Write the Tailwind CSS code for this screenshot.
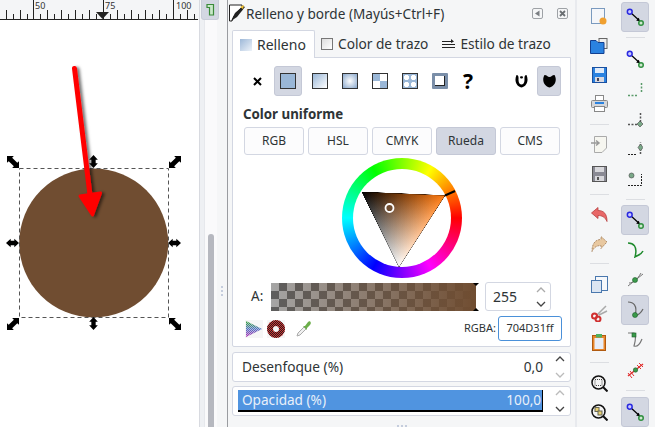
<!DOCTYPE html>
<html><head><meta charset="utf-8">
<script src="https://cdn.jsdelivr.net/npm/@tailwindcss/browser@4"></script>
</head>
<body class="m-0 overflow-hidden bg-[#f5f6f7]">
<svg class="absolute h-0 w-0">
<defs>
<symbol id="node" viewBox="0 0 24 24"><path d="M6 6 L17 16" stroke="#000" stroke-width="1.600"/><path d="M19 18 L13.500 16.500 L17 13Z" fill="#000"/><circle cx="5" cy="5" r="3.200" fill="#c8c8ff" stroke="#2a2ae0" stroke-width="2"/><circle cx="20" cy="20" r="3" fill="#cfe8cf" stroke="#2f8f3f" stroke-width="2"/></symbol>
<symbol id="arr" viewBox="0 0 14 14"><path d="M0 0H8L6 2L12 8L14 6V14H6L8 12L2 6L0 8Z" fill="#000"/></symbol>
<symbol id="arv" viewBox="0 0 14 18"><path d="M7 0L13 6.500H10V11.500H13L7 18L1 11.500H4V6.500H1Z" fill="#000"/></symbol>
<linearGradient id="tri1" gradientUnits="userSpaceOnUse" x1="37.600" y1="69.700" x2="103" y2="37.500"><stop offset="0" stop-color="#000"/><stop offset="1" stop-color="#ff7a10"/></linearGradient>
<linearGradient id="tri2" gradientUnits="userSpaceOnUse" x1="60.100" y1="35.700" x2="57" y2="109"><stop offset="0" stop-color="#000"/><stop offset="1" stop-color="#fff"/></linearGradient>
<pattern id="mesh" width="2" height="2" patternUnits="userSpaceOnUse"><rect width="1" height="1" fill="#222"/><rect x="1" y="1" width="1" height="1" fill="#222"/></pattern>
<pattern id="meshw" width="2" height="2" patternUnits="userSpaceOnUse"><rect width="1" height="1" fill="#fff"/><rect x="1" y="1" width="1" height="1" fill="#fff"/></pattern>
<linearGradient id="rainb" x1="0" y1="0" x2="0" y2="1"><stop offset="0" stop-color="#30a030"/><stop offset=".5" stop-color="#5070c0"/><stop offset="1" stop-color="#b030b0"/></linearGradient>
<filter id="sh" x="-30%" y="-10%" width="160%" height="120%"><feDropShadow dx="2.500" dy="1" stdDeviation="1.500" flood-color="#000" flood-opacity=".55"/></filter>
</defs>
</svg>

<div class="flex h-[427px] w-[655px] overflow-hidden font-['Noto_Sans',sans-serif] text-[#2e3436]">

  <!-- canvas column -->
  <div class="flex w-[199px] shrink-0 flex-col">
    <div class="relative h-[20px] shrink-0 bg-[#f4f5f7]">
      <svg class="absolute left-0 top-0" width="199" height="20">
        <path d="M6.500 19V10M13.500 19V14M20.500 19V10M27.500 19V14M33.500 19V0M40.500 19V14M47.500 19V10M54.500 19V14M61.500 19V10M68.500 19V14M75.500 19V10M82.500 19V14M89.500 19V10M96.500 19V14M103.500 19V0M110.500 19V14M117.500 19V10M124.500 19V14M131.500 19V10M138.500 19V14M145.500 19V10M152.500 19V14M159.500 19V10M166.500 19V14M173.500 19V0M180.500 19V14M187.500 19V10M194.500 19V14" stroke="#222" fill="none"/>
        <path d="M0 19.500H198" stroke="#222"/>
        <path d="M96 12H109L102.500 19Z" fill="#222"/>
      </svg>
      <span class="absolute left-[35px] top-0 text-[9px] leading-[12px] text-[#333]">50</span>
      <span class="absolute left-[105px] top-0 text-[9px] leading-[12px] text-[#333]">75</span>
      <span class="absolute left-[176px] top-0 text-[9px] leading-[12px] text-[#333]">100</span>
    </div>
    <div class="relative flex-1 bg-white">
      <svg class="absolute left-0 top-0" width="199" height="407" viewBox="0 20 199 407">
        <circle cx="93.700" cy="243" r="74.500" fill="#704d31"/>
        <rect x="19.500" y="168.500" width="149" height="149" fill="none" stroke="#555" stroke-dasharray="4 3"/>
        <g filter="url(#sh)">
          <path d="M74.500 68.500L90 195" stroke="#ff0000" stroke-width="5" stroke-linecap="round" fill="none"/>
          <path d="M80 196L100.500 193L92.500 215Z" fill="#ff0000" stroke="#ff0000" stroke-width="3" stroke-linejoin="round"/>
        </g>
        <use href="#arr" x="7" y="156" width="12" height="12"/>
        <use href="#arr" x="169" y="156" width="12" height="12" transform="matrix(-1 0 0 1 350 0)"/>
        <use href="#arr" x="7" y="318" width="12" height="12" transform="matrix(1 0 0 -1 0 648)"/>
        <use href="#arr" x="169" y="318" width="12" height="12"/>
        <use href="#arv" x="87" y="155" width="13" height="13"/>
        <use href="#arv" x="87" y="317" width="13" height="13"/>
        <use href="#arv" x="0" y="0" width="13" height="13" transform="translate(19 236.500) rotate(90)"/>
        <use href="#arv" x="0" y="0" width="13" height="13" transform="translate(181 236.500) rotate(90)"/>
      </svg>
    </div>
  </div>

  <!-- scrollbar strip -->
  <div class="flex w-[28px] shrink-0 flex-col border-l border-[#d8dae0]">
    <div class="ml-[1px] flex h-[20px] w-[18px] items-center justify-center rounded-b-[3px] border border-t-0 border-[#c8ccd8] bg-[#d3d7e2]">
      <svg width="9" height="13" viewBox="0 0 9 13"><path d="M1 1.500H7.500V12H3.500V4.500H1Z" fill="#c9e8c9" stroke="#3a8a3a" stroke-width="1.200"/></svg>
    </div>
    <div class="relative flex flex-1">
      <div class="w-[4px] bg-[#eef0f3]"></div>
      <div class="relative w-[13px] border-l border-[#e6e8ec] bg-[#fafafb]">
        <div class="absolute left-[3px] top-[214px] h-[200px] w-[6px] rounded-[3px] bg-[#b6b8bf]"></div>
      </div>
      <div class="flex flex-1 flex-col items-center pt-[266px]">
        <div class="grid gap-[2px] text-[0]">
          <span class="size-[2px] bg-[#c5cddd]"></span><span class="size-[2px] bg-[#c5cddd]"></span><span class="size-[2px] bg-[#c5cddd]"></span>
        </div>
      </div>
    </div>
  </div>

  <!-- panel -->
  <div class="flex w-[348px] shrink-0 flex-col border-l border-[#9a9ca0]">
    <div class="flex h-[27px] shrink-0 items-center pl-[1px] pr-[7px]">
      <svg width="17" height="19" viewBox="0 0 17 19"><path d="M0.500 1H13V3L5 12L3 17H0.500Z" fill="#fff" stroke="#222"/><path d="M2 17L6 9L14 2L16 3L8 13Z" fill="#222"/><path d="M11 3L15 1L14 5Z" fill="#f2c230"/></svg>
      <span class="text-[13.600px] leading-[20px]">Relleno y borde (Mayús+Ctrl+F)</span>
      <div class="ml-auto flex gap-[14px]">
        <span class="flex size-[11px] items-center justify-center rounded-[2px] border border-[#9ea2a6]"><svg width="7" height="7" viewBox="0 0 7 7"><path d="M5.500 0.500V6.500L1 3.500Z" fill="#7a7e82"/></svg></span>
        <span class="flex size-[11px] items-center justify-center rounded-[2px] border border-[#9ea2a6]"><svg width="7" height="7" viewBox="0 0 7 7"><path d="M1 1L6 6M6 1L1 6" stroke="#6a6e72" stroke-width="1.800"/></svg></span>
      </div>
    </div>

    <div class="flex flex-1 flex-col bg-[#f5f6f7] pl-[4px] pr-[4px] pt-[3px]">
      <!-- tabs -->
      <div class="relative z-10 flex h-[28px] shrink-0 items-stretch">
        <div class="flex w-[83px] items-center gap-[5px] rounded-t-[2px] border border-b-0 border-[#d3d7e2] bg-white pl-[7px]">
          <span class="size-[12px] bg-[linear-gradient(135deg,#9db8d8,#eef3f9)]"></span>
          <span class="text-[14px]">Relleno</span>
        </div>
        <div class="flex items-center gap-[5px] pl-[6px]">
          <span class="size-[12px] border border-[#777] bg-[linear-gradient(135deg,#ddd,#fff)]"></span>
          <span class="text-[13.700px]">Color de trazo</span>
        </div>
        <div class="flex items-center gap-[5px] pl-[14px]">
          <svg width="13" height="12" viewBox="0 0 13 12"><path d="M0 3.500H11M0 6.500H13M0 9.500H13" stroke="#222"/><path d="M9 1L12 3.500L9 5Z" fill="#222"/></svg>
          <span class="text-[13.700px]">Estilo de trazo</span>
        </div>
      </div>

      <!-- card -->
      <div class="mt-[-1px] flex h-[290px] w-[339px] shrink-0 flex-col rounded-b-[2px] border border-[#d3d7e2] bg-white">
        <div class="mt-[8px] flex h-[30px] items-stretch pl-[12px]">
          <span class="flex w-[29px] items-center justify-center pr-[5px]"><svg width="9" height="9" viewBox="0 0 9 9"><path d="M1 1L8 8M8 1L1 8" stroke="#000" stroke-width="2"/></svg></span>
          <span class="flex w-[28px] items-center justify-center rounded-[3px] border border-[#c4c8d6] bg-[#d3d7e2]"><span class="size-[16px] border border-[#333] bg-[#9ab7d7]"></span></span>
          <span class="flex w-[30px] items-center justify-center pl-[6px]"><span class="size-[16px] border border-[#333] bg-[linear-gradient(135deg,#9ab7d7,#fff)]"></span></span>
          <span class="flex w-[30px] items-center justify-center pl-[6px]"><span class="size-[16px] border border-[#333] bg-[radial-gradient(circle,#fff,#8aa8cc)]"></span></span>
          <span class="flex w-[30px] items-center justify-center pl-[6px]"><span class="size-[16px] border border-[#333] bg-[conic-gradient(#fff_25%,#9ab7d7_0_50%,#fff_0_75%,#9ab7d7_0)]"></span></span>
          <span class="flex w-[30px] items-center justify-center pl-[6px]"><span class="size-[16px] border border-[#333] bg-[#9ab7d7] bg-[radial-gradient(circle,#fff_45%,#9ab7d7_60%)] bg-[length:7px_7px]"></span></span>
          <span class="flex w-[30px] items-center justify-center pl-[6px]"><span class="size-[16px] rounded-[1px] border-[3px] border-[#7a8ea8] bg-white shadow-[inset_-1px_-1px_0_#222]"></span></span>
          <span class="flex w-[32px] items-center justify-center text-[21px] font-bold leading-none text-black">?</span>
          <span class="ml-[25px] flex w-[24px] items-center justify-center">
            <svg width="13" height="14" viewBox="0 0 13 14"><path d="M1.500 1C4 1 3.500 4 3.500 6C3.500 9 5 10.500 6.500 10.500C8 10.500 9.500 9 9.500 6C9.500 4 9 1 11.500 1C13.500 5 13 12 6.500 13.500C0 12 -0.500 5 1.500 1Z" fill="#000"/><path d="M5 3C5 2 8 2 8 3C8 5 5 5 5 3Z" fill="#000"/></svg>
          </span>
          <span class="ml-[4px] flex w-[24px] items-center justify-center rounded-[3px] border border-[#c4c8d6] bg-[#d3d7e2]">
            <svg width="13" height="14" viewBox="0 0 13 14"><path d="M1.500 1C4 1 4.500 3 6.500 3C8.500 3 9 1 11.500 1C14 5 13 12 6.500 13.500C0 12 -1 5 1.500 1Z" fill="#000"/></svg>
          </span>
        </div>
        <div class="ml-[10px] mt-[8px] text-[13.300px] font-bold leading-[20px]">Color uniforme</div>
        <div class="ml-[11px] mt-[3px] flex gap-[4px] text-[12px]">
          <span class="flex h-[28px] w-[60px] items-center justify-center rounded-[3px] border border-[#d3d7e2] bg-[#fcfcfd]">RGB</span>
          <span class="flex h-[28px] w-[60px] items-center justify-center rounded-[3px] border border-[#d3d7e2] bg-[#fcfcfd]">HSL</span>
          <span class="flex h-[28px] w-[60px] items-center justify-center rounded-[3px] border border-[#d3d7e2] bg-[#fcfcfd]">CMYK</span>
          <span class="flex h-[28px] w-[60px] items-center justify-center rounded-[3px] border border-[#c4c8d6] bg-[#d3d7e2]">Rueda</span>
          <span class="flex h-[28px] w-[60px] items-center justify-center rounded-[3px] border border-[#d3d7e2] bg-[#fcfcfd]">CMS</span>
        </div>
        <!-- wheel -->
        <div class="relative ml-[109px] mt-[3px] size-[120px] rounded-full bg-[conic-gradient(#80ff00,#ffff00_30deg,#ff0000_90deg,#ff00ff_150deg,#0000ff_210deg,#00ffff_270deg,#00ff00_330deg,#80ff00)]">
          <div class="absolute inset-[11px] rounded-full bg-white"></div>
          <svg class="absolute left-0 top-0" width="120" height="120" viewBox="0 0 120 120">
            <g class="isolate">
              <path d="M20 34L103 37.500L57 109Z" fill="#000"/>
              <path class="mix-blend-plus-lighter" d="M20 34L103 37.500L57 109Z" fill="url(#tri1)"/>
              <path class="mix-blend-plus-lighter" d="M20 34L103 37.500L57 109Z" fill="url(#tri2)"/>
            </g>
            <path d="M103 37.500L113 33" stroke="#000" stroke-width="2.200"/>
            <circle cx="47.500" cy="50" r="4" fill="#704d31" stroke="#fff" stroke-width="1.800"/>
          </svg>
        </div>
        <!-- alpha -->
        <div class="mt-[4px] flex items-center pl-[18px]">
          <span class="w-[20px] text-[13.500px]">A:</span>
          <div class="relative h-[28px] w-[205px] bg-[#a5a5a5] bg-[repeating-conic-gradient(#5e5e5e_0_25%,#a5a5a5_0_50%)] bg-[length:16px_16px]">
            <div class="h-full w-full bg-[linear-gradient(to_right,#704d3100,#704d31)]"></div>
            <span class="absolute right-[-3px] top-[0] size-0 border-x-[3px] border-t-[3px] border-x-transparent border-t-black"></span>
            <span class="absolute bottom-[0] right-[-3px] size-0 border-x-[3px] border-b-[3px] border-x-transparent border-b-black"></span>
          </div>
          <div class="ml-[9px] flex h-[29px] w-[66px] items-center justify-between rounded-[3px] border border-[#d3d7e2] bg-white pl-[7px] pr-[3px]">
            <span class="text-[14px]">255</span>
            <svg width="12" height="24" viewBox="0 0 12 24"><path d="M2 7L6 3L10 7" stroke="#aaa" fill="none" stroke-width="1.300"/><path d="M2 17L6 21L10 17" stroke="#444" fill="none" stroke-width="1.300"/></svg>
          </div>
        </div>
        <!-- icon row -->
        <div class="mt-[5px] flex h-[25px] items-center pl-[12px]">
          <svg width="18" height="18" viewBox="0 0 18 18"><rect width="18" height="18" fill="#f6f6f6"/><path d="M1 1L17 9L1 17Z" fill="url(#rainb)"/><path d="M1 1L17 9L1 17Z" fill="url(#meshw)" opacity=".55"/></svg>
          <svg width="18" height="18" viewBox="0 0 18 18" class="ml-[4px]"><rect width="18" height="18" fill="#f6f6f6"/><circle cx="9" cy="9" r="6" fill="none" stroke="#d83030" stroke-width="6"/><circle cx="9" cy="9" r="6" fill="none" stroke="url(#mesh)" stroke-width="6"/></svg>
          <svg width="16" height="17" viewBox="0 0 16 17" class="ml-[11px]"><path d="M1 16L2 13L8 7L10 9L4 15Z" fill="#f0f0f0" stroke="#aaa"/><path d="M7 6L9 6L12 2C14 0 16 3 14 5L11 8L11 10Z" fill="#6cae4a"/></svg>
          <span class="ml-[152px] text-[11px]">RGBA:</span>
          <span class="ml-[2px] flex h-[25px] w-[64px] items-center justify-center rounded-[3px] border border-[#4a90d9] bg-white text-[11px]">704D31ff</span>
        </div>
      </div>

      <!-- blur -->
      <div class="mt-[5px] flex h-[30px] w-[339px] shrink-0 items-stretch rounded-[3px] border border-[#d3d7e2] bg-white">
        <div class="flex flex-1 items-center justify-between pl-[9px] pr-[7px] text-[13.700px]">
          <span>Desenfoque (%)</span><span>0,0</span>
        </div>
        <svg width="20" height="28" viewBox="0 0 20 28"><path d="M6 8L10 4L14 8" stroke="#444" fill="none" stroke-width="1.300"/><path d="M6 20L10 24L14 20" stroke="#bbb" fill="none" stroke-width="1.300"/></svg>
      </div>
      <!-- opacity -->
      <div class="mt-[4px] flex h-[30px] w-[339px] shrink-0 items-center rounded-[3px] border border-[#d3d7e2] bg-white pl-[5px]">
        <div class="flex h-[22px] w-[306px] items-center justify-between border-b-2 border-r border-black bg-[#5094e0] pl-[4px] pr-[1px] text-[13.600px] text-[#e8f0fa]">
          <span>Opacidad (%)</span><span>100,0</span>
        </div>
        <svg width="27" height="28" viewBox="0 0 27 28"><path d="M13 8L17 4L21 8" stroke="#bbb" fill="none" stroke-width="1.300"/><path d="M13 20L17 24L21 20" stroke="#444" fill="none" stroke-width="1.300"/></svg>
      </div>
      <div class="mt-[9px] flex justify-center gap-[2px]">
        <span class="size-[2px] bg-[#c5cddd]"></span><span class="size-[2px] bg-[#c5cddd]"></span><span class="size-[2px] bg-[#c5cddd]"></span>
      </div>
    </div>
  </div>

  <!-- toolbar 1 -->
  <div class="flex w-[40px] shrink-0 flex-col items-center border-l-2 border-[#e8eaee] pt-[2px] pl-[6px]">
    <div class="flex h-[30px] items-center justify-center"><svg width="16" height="18" viewBox="0 0 16 18"><rect x="0.500" y="0.500" width="13" height="15" fill="#f4f6fa" stroke="#7a9abf"/><circle cx="12" cy="13" r="3.500" fill="#f0a030"/></svg></div>
    <div class="flex h-[30px] items-center justify-center"><svg width="18" height="16" viewBox="0 0 18 16"><rect x="9" y="0.500" width="8" height="10" fill="#eee" stroke="#666"/><path d="M0.500 2.500H6L8 4.500H14V15.500H0.500Z" fill="#2a82e0" stroke="#123f90"/></svg></div>
    <div class="flex h-[30px] items-center justify-center"><svg width="15" height="16" viewBox="0 0 15 16"><rect x="0.500" y="0.500" width="14" height="15" fill="#2a82e0" stroke="#1a50a0"/><rect x="3" y="1" width="9" height="5" fill="#dfeaf8"/><rect x="3" y="10" width="9" height="5" fill="#d8d8e0"/><rect x="5" y="11" width="2" height="3" fill="#445"/></svg></div>
    <div class="flex h-[30px] items-center justify-center"><svg width="17" height="17" viewBox="0 0 17 17"><rect x="4.500" y="0.500" width="8" height="5" fill="#fff" stroke="#888"/><rect x="0.500" y="5.500" width="16" height="7" rx="1" fill="#d4d6da" stroke="#888"/><rect x="4" y="7" width="9" height="2" fill="#2a82e0"/><rect x="3.500" y="11.500" width="10" height="5" fill="#fff" stroke="#888"/></svg></div>
    <div class="flex h-[12px] items-center"><span class="h-px w-[19px] bg-[#dcdee2]"></span></div>
    <div class="flex h-[30px] items-center justify-center"><svg width="16" height="17" viewBox="0 0 16 17"><path d="M3.500 0.500H15.500V12L11 16.500H3.500Z" fill="#f6f6f0" stroke="#aaa"/><path d="M0 7H7M5 4.500L8 7L5 9.500" stroke="#999" fill="none" stroke-width="1.500"/></svg></div>
    <div class="flex h-[30px] items-center justify-center"><svg width="15" height="16" viewBox="0 0 15 16"><rect x="0.500" y="0.500" width="14" height="15" fill="#8a8a94" stroke="#555"/><rect x="3" y="1" width="9" height="5" fill="#d8d8dc"/><rect x="3" y="10" width="9" height="5" fill="#d8d8dc"/><rect x="5" y="11" width="2" height="3" fill="#555"/></svg></div>
    <div class="flex h-[12px] items-center"><span class="h-px w-[19px] bg-[#dcdee2]"></span></div>
    <div class="flex h-[30px] items-center justify-center"><svg width="17" height="15" viewBox="0 0 17 15"><path d="M0.500 6L7 0.500V3.500C13 3.500 16 7 16 14.500C14 10 11 8.500 7 8.500V11.500Z" fill="#e86868" stroke="#b84040" stroke-width=".8"/></svg></div>
    <div class="flex h-[30px] items-center justify-center"><svg width="17" height="16" viewBox="0 0 17 16"><path d="M16 6L10 0.500V3.500C4 3.500 1 8 1 15.500C3 11 6 9.500 10 9.500V12.500Z" fill="#e8c8a0" stroke="#a07850" stroke-width=".8" stroke-dasharray="2 1"/></svg></div>
    <div class="flex h-[12px] items-center"><span class="h-px w-[19px] bg-[#dcdee2]"></span></div>
    <div class="flex h-[30px] items-center justify-center"><svg width="17" height="17" viewBox="0 0 17 17"><rect x="4.500" y="0.500" width="12" height="14" fill="#f6f8fb" stroke="#4a78ae"/><rect x="0.500" y="4.500" width="10" height="12" fill="#dbe5f2" stroke="#4a78ae"/></svg></div>
    <div class="flex h-[30px] items-center justify-center"><svg width="17" height="17" viewBox="0 0 17 17"><path d="M6 10L15 1M8 10L16 6" stroke="#aaa" stroke-width="1.500"/><circle cx="3.500" cy="11" r="2.500" fill="none" stroke="#d03030" stroke-width="2"/><circle cx="7" cy="14" r="2.500" fill="none" stroke="#d03030" stroke-width="2"/></svg></div>
    <div class="flex h-[30px] items-center justify-center"><svg width="14" height="17" viewBox="0 0 14 17"><rect x="0.500" y="1.500" width="13" height="15" fill="#e8862a" stroke="#b05a10"/><rect x="2.500" y="4" width="9" height="11" fill="#e8eef8"/><rect x="4" y="0" width="6" height="3.500" fill="#50b060"/></svg></div>
    <div class="flex h-[12px] items-center"><span class="h-px w-[19px] bg-[#dcdee2]"></span></div>
    <div class="flex h-[30px] items-center justify-center"><svg width="17" height="17" viewBox="0 0 17 17"><circle cx="7.500" cy="7.500" r="6.500" fill="#f4f4f4" stroke="#111" stroke-width="1.500"/><rect x="4" y="4.500" width="7" height="6" fill="none" stroke="#444" stroke-dasharray="1 1"/><path d="M12 12L16.500 16.500" stroke="#111" stroke-width="2"/></svg></div>
    <div class="flex h-[30px] items-center justify-center"><svg width="17" height="17" viewBox="0 0 17 17"><circle cx="7.500" cy="7.500" r="6.500" fill="#f4f4f4" stroke="#111" stroke-width="1.500"/><rect x="4" y="3.500" width="4" height="4" fill="#e8d070" stroke="#665"/><rect x="7" y="7" width="4" height="4" fill="#e8d070" stroke="#665"/><path d="M12 12L16.500 16.500" stroke="#111" stroke-width="2"/></svg></div>
  </div>

  <!-- toolbar 2 -->
  <div class="flex w-[40px] shrink-0 flex-col items-center pt-[2px]">
    <div class="flex h-[30px] w-[28px] items-center justify-center rounded-[3px] border border-[#c4c8d6] bg-[#d3d7e2]"><svg width="18" height="18"><use href="#node"/></svg></div>
    <div class="flex h-[12px] items-center"><span class="h-px w-[19px] bg-[#dcdee2]"></span></div>
    <div class="flex h-[30px] items-center justify-center"><svg width="18" height="18"><use href="#node"/></svg></div>
    <div class="flex h-[30px] items-center justify-center"><svg width="16" height="16" viewBox="0 0 16 16"><path d="M1 14.500H11M14.500 11V1" stroke="#5a9a6a" stroke-width="1.500" stroke-dasharray="2 1.500"/></svg></div>
    <div class="flex h-[30px] items-center justify-center"><svg width="16" height="16" viewBox="0 0 16 16"><path d="M1 13.500H10M13.500 11V1" stroke="#555" stroke-width="1.500" stroke-dasharray="2 1.500"/><path d="M13 10L16 13L13 16L10 13Z" fill="#7aa888" stroke="#444" stroke-width=".6"/></svg></div>
    <div class="flex h-[30px] items-center justify-center"><svg width="16" height="16" viewBox="0 0 16 16"><path d="M1 13.500H10" stroke="#222" stroke-dasharray="2 1"/><path d="M13.500 13V8M13.500 5V1" stroke="#555" stroke-width="1.500" stroke-dasharray="2 1.500"/><path d="M13.500 3L16 6.500L13.500 10L11 6.500Z" fill="#7aa888" stroke="#444" stroke-width=".6"/></svg></div>
    <div class="flex h-[30px] items-center justify-center"><svg width="16" height="16" viewBox="0 0 16 16"><path d="M1 14.500H14.500V3" stroke="#222" stroke-dasharray="2 1" fill="none"/><circle cx="4.500" cy="4.500" r="2.500" fill="#7aa888" stroke="#444" stroke-width=".6"/></svg></div>
    <div class="flex h-[12px] items-center"><span class="h-px w-[19px] bg-[#dcdee2]"></span></div>
    <div class="flex h-[30px] w-[28px] items-center justify-center rounded-[3px] border border-[#c4c8d6] bg-[#d3d7e2]"><svg width="18" height="18"><use href="#node"/></svg></div>
    <div class="flex h-[30px] items-center justify-center"><svg width="17" height="16" viewBox="0 0 17 16"><path d="M1 1C6 1 11 4 8 15C11 13 14 13 16 9" stroke="#1e8a2c" stroke-width="1.500" fill="none"/></svg></div>
    <div class="flex h-[30px] items-center justify-center"><svg width="17" height="16" viewBox="0 0 17 16"><path d="M1 14L16 2M2 11C6 11 10 8 14 1" stroke="#777" fill="none"/><circle cx="8" cy="8" r="2.500" fill="#3a9a4a" stroke="#1d5d2a" stroke-width=".6"/></svg></div>
    <div class="flex h-[30px] w-[28px] items-center justify-center rounded-[3px] border border-[#c4c8d6] bg-[#d3d7e2]"><svg width="17" height="18" viewBox="0 0 17 18"><path d="M1 1C6 1 11 4 8 15C11 14 14 12 16 8" stroke="#666" stroke-width="1.200" fill="none"/><circle cx="8" cy="14" r="2.500" fill="#3a9a4a" stroke="#1d5d2a" stroke-width=".6"/></svg></div>
    <div class="flex h-[30px] items-center justify-center"><svg width="17" height="16" viewBox="0 0 17 16"><path d="M1 1H7C10 4 8 10 7 14C10 15 13 12 15 7" stroke="#777" stroke-width="1.200" fill="none"/><rect x="5" y="1" width="4" height="4" fill="#3a9a4a" stroke="#1d5d2a" stroke-width=".6"/></svg></div>
    <div class="flex h-[30px] items-center justify-center"><svg width="17" height="16" viewBox="0 0 17 16"><path d="M1 14L16 2" stroke="#e03030" stroke-width="1.500"/><path d="M1 11L5 16M3 9L7 14M10 3L14 7M12 1L16 5" stroke="#e03030"/><circle cx="8.500" cy="8" r="2.200" fill="#3a9a4a" stroke="#1d5d2a" stroke-width=".6"/></svg></div>
    <div class="flex h-[12px] items-center"><span class="h-px w-[19px] bg-[#dcdee2]"></span></div>
    <div class="flex h-[30px] w-[28px] shrink-0 items-center justify-center rounded-[3px] border border-[#c4c8d6] bg-[#d3d7e2]"><svg width="18" height="18"><use href="#node"/></svg></div>
  </div>
</div>
</body></html>
